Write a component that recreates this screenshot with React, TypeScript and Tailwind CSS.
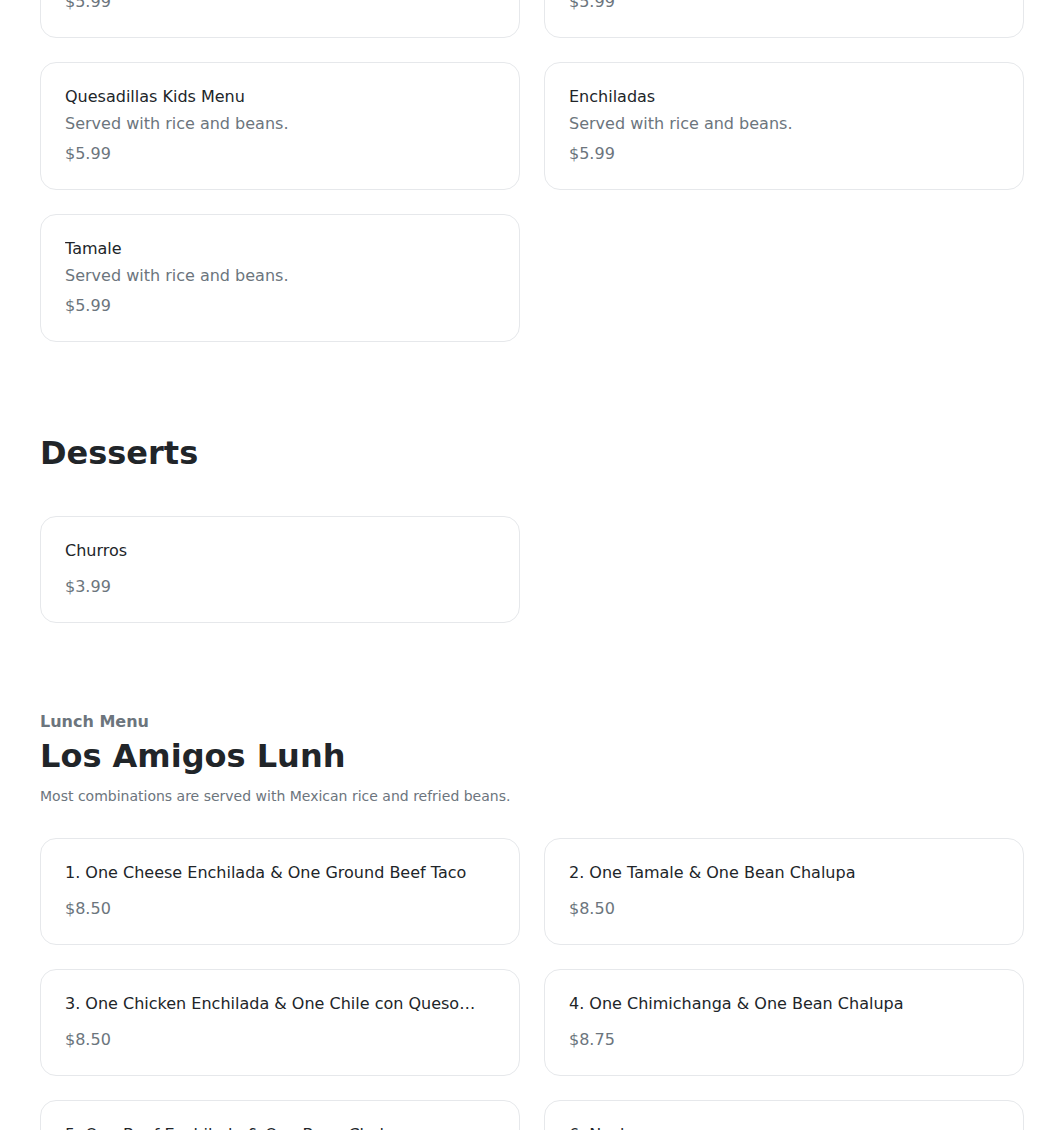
type Item = { name: string; desc?: string; price: string };

const kids: Item[] = [
  { name: 'Tacos Kids Menu', desc: 'Served with rice and beans.', price: '$5.99' },
  { name: 'Burrito', desc: 'Served with rice and beans.', price: '$5.99' },
  { name: 'Quesadillas Kids Menu', desc: 'Served with rice and beans.', price: '$5.99' },
  { name: 'Enchiladas', desc: 'Served with rice and beans.', price: '$5.99' },
  { name: 'Tamale', desc: 'Served with rice and beans.', price: '$5.99' },
];

const desserts: Item[] = [{ name: 'Churros', price: '$3.99' }];

const lunch: Item[] = [
  { name: '1. One Cheese Enchilada & One Ground Beef Taco', price: '$8.50' },
  { name: '2. One Tamale & One Bean Chalupa', price: '$8.50' },
  { name: '3. One Chicken Enchilada & One Chile con Queso…', price: '$8.50' },
  { name: '4. One Chimichanga & One Bean Chalupa', price: '$8.75' },
  { name: '5. One Beef Enchilada & One Bean Chalupa', price: '$8.50' },
  { name: '6. Nachos', price: '$8.50' },
];

function MenuCard({ item }: { item: Item }) {
  return (
    <div className="rounded-2xl border border-[#e6e8eb] bg-white px-6 pt-[22px] pb-[23px]">
      <p className="truncate text-base leading-6 text-[#212529]">{item.name}</p>
      {item.desc && <p className="mt-[3px] text-base leading-6 text-[#6c757d]">{item.desc}</p>}
      <p className={(item.desc ? 'mt-1.5' : 'mt-3') + ' text-base leading-6 text-[#6c757d]'}>{item.price}</p>
    </div>
  );
}

function Grid({ items }: { items: Item[] }) {
  return (
    <div className="grid grid-cols-2 gap-6">
      {items.map((it) => (
        <MenuCard key={it.name} item={it} />
      ))}
    </div>
  );
}

export default function App() {
  return (
    <div
      className="h-[1130px] overflow-hidden bg-white"
      style={{ fontFamily: '"DejaVu Sans", sans-serif' }}
    >
      <div className="-mt-[90px] pl-10 pr-5">
        {/* Kids menu (scrolled) */}
        <section>
          <Grid items={kids} />
        </section>

        {/* Desserts */}
        <section className="pt-[92px]">
          <h2 className="text-[32px] leading-[1.2] font-bold text-[#212529]">Desserts</h2>
          <div className="mt-[44px]">
            <Grid items={desserts} />
          </div>
        </section>

        {/* Lunch */}
        <section className="pt-[87px]">
          <p className="text-base leading-6 font-bold text-[#6c757d]">Lunch Menu</p>
          <h2 className="mt-[3px] text-[32px] leading-[1.2] font-bold text-[#212529]">Los Amigos Lunh</h2>
          <p className="mt-[10px] text-sm leading-5 text-[#6c757d]">
            Most combinations are served with Mexican rice and refried beans.
          </p>
          <div className="mt-[32px]">
            <Grid items={lunch} />
          </div>
        </section>
      </div>
    </div>
  );
}
